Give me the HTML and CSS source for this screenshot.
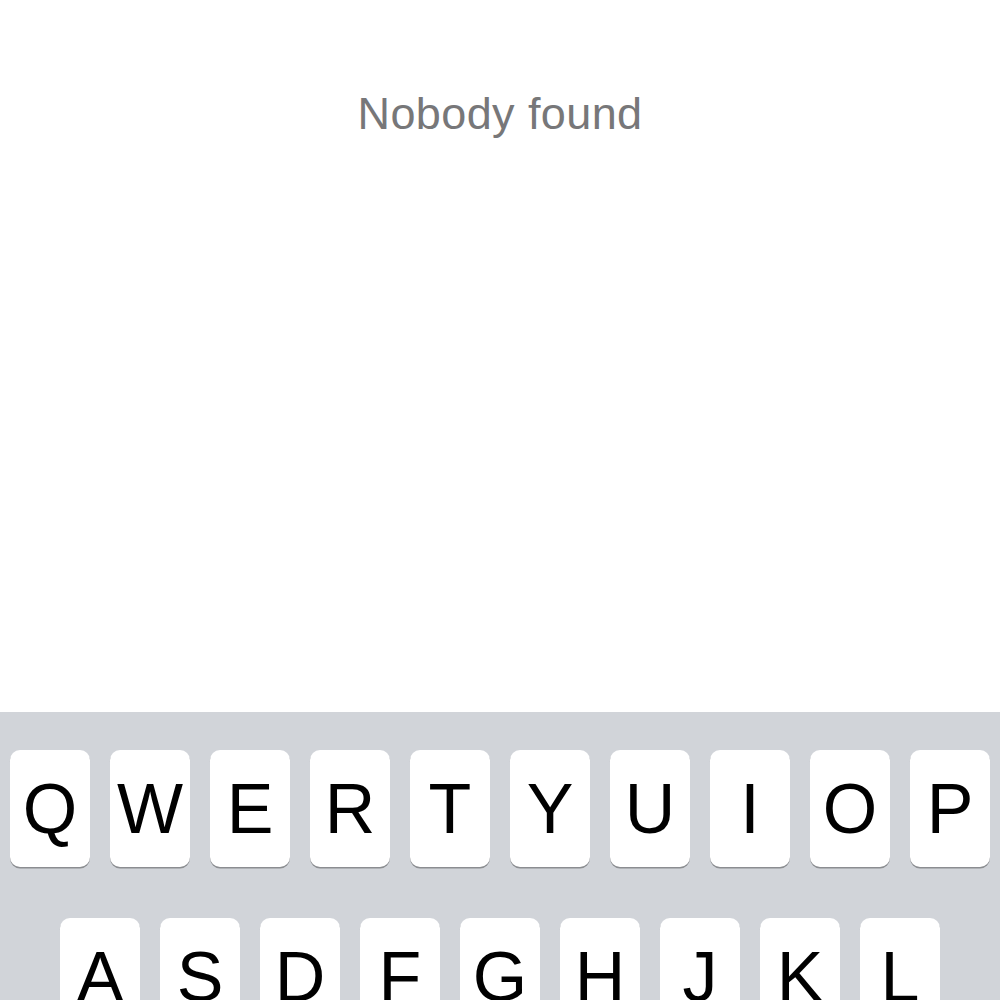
FILE: index.html
```html
<!DOCTYPE html>
<html>
<head>
<meta charset="utf-8">
<link rel="stylesheet" href="styles.css">
</head>
<body>
<div class="screen">
  <main class="content">
    <p class="empty">Nobody found</p>
  </main>
  <section class="keyboard">
    <div class="row row-top">
      <div class="key">Q</div><div class="key">W</div><div class="key">E</div><div class="key">R</div><div class="key">T</div><div class="key">Y</div><div class="key">U</div><div class="key">I</div><div class="key">O</div><div class="key">P</div>
    </div>
    <div class="row row-mid">
      <div class="key">A</div><div class="key">S</div><div class="key">D</div><div class="key">F</div><div class="key">G</div><div class="key">H</div><div class="key">J</div><div class="key">K</div><div class="key">L</div>
    </div>
  </section>
</div>
</body>
</html>
```
FILE: styles.css
```css
html, body {
  margin: 0;
  padding: 0;
  background: #ffffff;
}
body {
  font-family: "Liberation Sans", Arial, sans-serif;
}
.screen {
  width: 1000px;
  height: 1000px;
  overflow: hidden;
  display: flex;
  flex-direction: column;
}
.content {
  height: 712px;
  flex: none;
  padding-top: 88px;
  box-sizing: border-box;
  text-align: center;
}
.empty {
  margin: 0;
  font-size: 45px;
  line-height: 52px;
  color: #777779;
  letter-spacing: 0.4px;
}
.keyboard {
  flex: 1;
  background: #d1d4d9;
  padding-top: 38px;
  display: flex;
  flex-direction: column;
  gap: 51px;
}
.row {
  display: flex;
  gap: 20px;
}
.row-top {
  padding-left: 10px;
}
.row-mid {
  justify-content: center;
}
.key {
  width: 80px;
  height: 117px;
  flex: none;
  background: #ffffff;
  border-radius: 10px;
  box-shadow: 0 1.5px 0 #8b8d91;
  display: flex;
  align-items: center;
  justify-content: center;
  font-size: 70px;
  color: #000000;
  line-height: 1;
}
```
